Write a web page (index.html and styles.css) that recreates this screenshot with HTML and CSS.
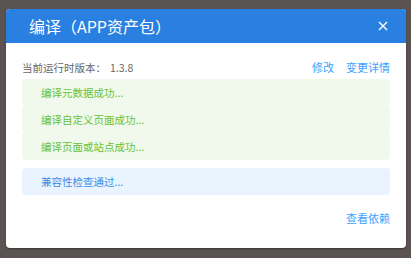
FILE: index.html
```html
<!DOCTYPE html>
<html lang="zh-CN">
<head>
<meta charset="utf-8">
<title>编译（APP资产包）</title>
<link rel="stylesheet" href="styles.css">
</head>
<body>
<div class="dialog">
  <div class="dialog-header">
    <span class="dialog-title">编译（APP资产包）</span>
    <svg class="close" width="10" height="10" viewBox="0 0 10 10"><path d="M1 1L9 9M9 1L1 9" stroke="#fff" stroke-width="1.4" fill="none"/></svg>
  </div>
  <div class="dialog-body">
    <div class="version-row">
      <span class="version">当前运行时版本：<span class="num">1.3.8</span></span>
      <span class="links"><a class="link">修改</a><a class="link">变更详情</a></span>
    </div>
    <div class="alerts">
      <div class="alert success">编译元数据成功...</div>
      <div class="alert success">编译自定义页面成功...</div>
      <div class="alert success">编译页面或站点成功...</div>
      <div class="alert info">兼容性检查通过...</div>
    </div>
    <div class="footer">
      <a class="link">查看依赖</a>
    </div>
  </div>
</div>
</body>
</html>
```
FILE: styles.css
```css
html, body {
  margin: 0;
  padding: 0;
}
body {
  background: #5a5351;
  width: 411px;
  height: 258px;
  font-family: "Noto Sans CJK SC", "Noto Sans", sans-serif;
  overflow: hidden;
}
.dialog {
  margin: 9px 0 0 6px;
  width: 400px;
  height: 239px;
  background: #fff;
  border-radius: 4px;
  box-shadow: 0 1px 2px rgba(0,0,0,0.35);
  overflow: hidden;
  display: flex;
  flex-direction: column;
}
.dialog-header {
  height: 34px;
  background: #2a80e0;
  display: flex;
  align-items: center;
  justify-content: space-between;
  padding: 0 18px 0 23px;
}
.dialog-title {
  color: #fff;
  font-size: 16px;
  line-height: 20px;
}
.close {
  display: block;
}
.dialog-body {
  padding: 0 16px;
  flex: 1;
  display: flex;
  flex-direction: column;
}
.version-row {
  margin-top: 14px;
  height: 20px;
  margin-bottom: 2px;
  display: flex;
  align-items: center;
  justify-content: space-between;
}
.version {
  color: #666;
  font-size: 10.5px;
}
.num {
  margin-left: 4px;
}
.links {
  display: flex;
  gap: 12px;
}
.link {
  color: #409eff;
  font-size: 11px;
  cursor: pointer;
}
.alerts {
  display: flex;
  flex-direction: column;
}
.alert {
  height: 27px;
  border-radius: 4px;
  padding-left: 19px;
  display: flex;
  align-items: center;
  font-size: 10.5px;
}
.success {
  background: #f0f9eb;
  color: #67c23a;
}
.info {
  margin-top: 8px;
  background: #e9f4ff;
  color: #3a8ee6;
}
.footer {
  margin-top: 13px;
  height: 20px;
  display: flex;
  align-items: center;
  justify-content: flex-end;
}
```
